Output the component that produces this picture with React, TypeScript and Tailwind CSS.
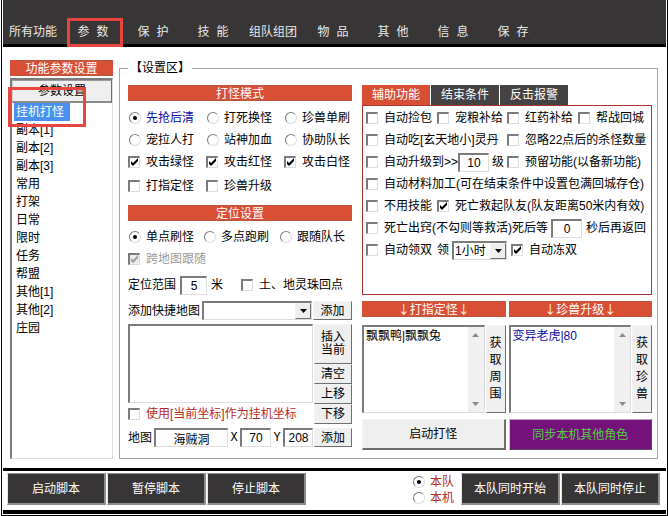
import type { ReactNode } from 'react';
import { clsx } from 'clsx';

interface NavItem {
  readonly id: string;
  readonly label: string;
}

const NAV_ITEMS: NavItem[] = [
  { id: 'all', label: '所有功能' },
  { id: 'params', label: '参 数' },
  { id: 'guard', label: '保 护' },
  { id: 'skill', label: '技 能' },
  { id: 'team', label: '组队组团' },
  { id: 'items', label: '物 品' },
  { id: 'other', label: '其 他' },
  { id: 'info', label: '信 息' },
  { id: 'save', label: '保 存' },
];

const SECTIONS = [
  '挂机打怪',
  '副本[1]',
  '副本[2]',
  '副本[3]',
  '常用',
  '打架',
  '日常',
  '限时',
  '任务',
  '帮盟',
  '其他[1]',
  '其他[2]',
  '庄园',
];

const BEVEL = 'border border-t-[#f4f4f4] border-l-[#f4f4f4] border-b-[#6e6e6e] border-r-[#6e6e6e] bg-[#efefef]';
const SUNKEN = 'border-t-2 border-l-2 border-b border-r border-t-[#7b7b7b] border-l-[#7b7b7b] border-b-[#dcdcdc] border-r-[#dcdcdc] bg-white';

interface ChoiceProps {
  children: ReactNode;
  checked?: boolean;
  disabled?: boolean;
  className?: string;
}

function Tick({ children, checked, disabled, className }: ChoiceProps) {
  return (
    <label className={clsx('flex items-center gap-[6px] whitespace-nowrap', disabled && 'text-[#9c9c9c]', className)}>
      <span className="relative size-3 shrink-0">
        <input
          type="checkbox"
          defaultChecked={checked}
          disabled={disabled}
          className="peer block size-3 appearance-none border-t-2 border-l-2 border-b border-r border-t-[#7b7b7b] border-l-[#7b7b7b] border-b-[#dcdcdc] border-r-[#dcdcdc] bg-white disabled:bg-[#ececec]"
        />
        <svg viewBox="0 0 12 12" className="pointer-events-none absolute inset-0 hidden size-3 peer-checked:block">
          <path d="M3 5v3l2 2 5-5V2L5 7z" fill="currentColor" />
        </svg>
      </span>
      <span>{children}</span>
    </label>
  );
}

function Radio({ children, checked, name, className }: ChoiceProps & { name: string }) {
  return (
    <label className={clsx('flex items-center gap-[5px] whitespace-nowrap', className)}>
      <span className="relative ml-px size-3 shrink-0">
        <input
          type="radio"
          name={name}
          defaultChecked={checked}
          className="peer block size-3 appearance-none rounded-full border border-t-[#7b7b7b] border-l-[#7b7b7b] border-b-[#dcdcdc] border-r-[#dcdcdc] bg-white"
        />
        <span className="pointer-events-none absolute top-1 left-1 hidden size-1 rounded-full bg-black peer-checked:block" />
      </span>
      <span>{children}</span>
    </label>
  );
}

function Bar({ children, className }: { children: ReactNode; className?: string }) {
  return (
    <h2
      className={clsx(
        "flex h-4 items-center justify-center border-y border-y-[#b5563f] bg-[#d94f35] font-['Noto_Sans_CJK_SC',sans-serif] text-white",
        className,
      )}
    >
      {children}
    </h2>
  );
}

function Field({ label, value, className }: { label: string; value: string; className: string }) {
  return (
    <input
      aria-label={label}
      defaultValue={value}
      className={clsx('h-[19px] min-w-0 shrink-0 text-center', SUNKEN, className)}
    />
  );
}

function Dropdown({ label, options, className }: { label: string; options: string[]; className: string }) {
  return (
    <span className={clsx('relative shrink-0', className)}>
      <select aria-label={label} className={clsx('block h-[19px] w-full appearance-none pl-px', SUNKEN)}>
        {options.map(option => (
          <option key={option}>{option}</option>
        ))}
      </select>
      <span className={clsx('pointer-events-none absolute top-[2px] right-px flex h-4 w-4 items-center justify-center', BEVEL)}>
        <svg viewBox="0 0 7 4" className="h-1 w-[7px]">
          <path d="M0 0h7L3.5 4z" fill="#000" />
        </svg>
      </span>
    </span>
  );
}

function PushButton({ children, className }: { children: ReactNode; className?: string }) {
  return (
    <button type="button" className={clsx('flex items-center justify-center', BEVEL, className)}>
      {children}
    </button>
  );
}

function TargetList({ label, value, action, className }: { label: string; value: string; action: string; className?: string }) {
  return (
    <div className="flex h-[88px]">
      <div className={clsx('flex min-w-0 flex-1', SUNKEN)}>
        <textarea
          aria-label={label}
          defaultValue={value}
          className={clsx('min-w-0 flex-1 resize-none overflow-hidden pl-[2px] leading-[18px]', className)}
        />
        <div className="flex w-4 flex-col items-center justify-between bg-[#f0f0f0] py-[6px]">
          <svg viewBox="0 0 7 4" className="h-1 w-[7px]">
            <path d="M0 4h7L3.5 0z" fill="#8a8a8a" />
          </svg>
          <svg viewBox="0 0 7 4" className="h-1 w-[7px]">
            <path d="M0 0h7L3.5 4z" fill="#8a8a8a" />
          </svg>
        </div>
      </div>
      <PushButton className="ml-px w-5">
        <span className="w-3 leading-[17px] break-all">{action}</span>
      </PushButton>
    </div>
  );
}

function ScriptButton({ children }: { children: ReactNode }) {
  return (
    <button
      type="button"
      className="h-8 w-[99px] border border-t-[#8c8c8c] border-l-[#e4e4e4] border-r-2 border-b-2 border-r-[#8c8c8c] border-b-[#8c8c8c] bg-[#373535] text-white"
    >
      {children}
    </button>
  );
}

function TopNav() {
  return (
    <nav className="flex h-[47px] items-end border-b-[3px] border-black bg-[#373535] pt-[18px] font-['Liberation_Mono','Noto_Sans_CJK_SC',monospace] text-[#e9e9e9]">
      {NAV_ITEMS.map(item => (
        <button key={item.id} type="button" className="relative h-[26px] w-[60px] shrink-0 pt-1 whitespace-nowrap">
          {item.label}
          {item.id === 'params' && (
            <span className="pointer-events-none absolute top-0 right-0 h-[29px] w-14 border-[3px] border-[#e8453f]" />
          )}
        </button>
      ))}
    </nav>
  );
}

function Sidebar() {
  return (
    <aside className="flex w-[103px] shrink-0 flex-col">
      <Bar>功能参数设置</Bar>
      <div className={clsx('relative mt-[2px] flex-1', SUNKEN)}>
        <button type="button" className="flex h-[23px] w-full items-center justify-center border border-r-[#6e6e6e] border-b-2 border-t-[#9a9a9a] border-l-[#d0d0d0] border-b-[#8a8a8a] bg-[#efefef]">
          参数设置
        </button>
        <ul className="pl-[2px]">
          {SECTIONS.map((section, index) => (
            <li key={section} className="h-[18px]">
              <button
                type="button"
                className={clsx('block h-[18px] px-[2px] leading-[18px]', index === 0 && 'w-14 bg-[#4a90ee] text-left text-white')}
              >
                {section}
              </button>
            </li>
          ))}
        </ul>
        <span className="pointer-events-none absolute top-[7px] -left-1 h-10 w-[78px] border-[3px] border-[#e8453f]" />
      </div>
    </aside>
  );
}

function ModePanel() {
  return (
    <div className="w-[224px] shrink-0">
      <Bar>打怪模式</Bar>
      <div className="mt-[6px] grid grid-cols-[78px_78px_68px] auto-rows-[22px]">
        <Radio name="mode" checked><span className="text-[#0b0ba8]">先抢后清</span></Radio>
        <Radio name="mode">打死换怪</Radio>
        <Radio name="mode">珍兽单刷</Radio>
        <Radio name="mode">宠拉人打</Radio>
        <Radio name="mode">站神加血</Radio>
        <Radio name="mode">协助队长</Radio>
        <Tick checked>攻击绿怪</Tick>
        <Tick checked>攻击红怪</Tick>
        <Tick checked>攻击白怪</Tick>
      </div>
      <div className="grid h-[26px] grid-cols-[78px_78px_68px]">
        <Tick>打指定怪</Tick>
        <Tick>珍兽升级</Tick>
      </div>

      <Bar className="mt-[6px]">定位设置</Bar>
      <div className="mt-[5px] grid grid-cols-[75px_76px_73px] auto-rows-[22px]">
        <Radio name="locate" checked>单点刷怪</Radio>
        <Radio name="locate">多点跑刷</Radio>
        <Radio name="locate">跟随队长</Radio>
        <Tick checked disabled>跨地图跟随</Tick>
      </div>
      <div className="mt-[2px] flex h-[26px] items-center">
        <span>定位范围</span>
        <Field label="定位范围" value="5" className="ml-1 w-[27px]" />
        <span className="ml-1">米</span>
        <Tick className="ml-[18px]">土、地灵珠回点</Tick>
      </div>
      <div className="mt-[3px] flex items-center">
        <span className="whitespace-nowrap">添加快捷地图</span>
        <Dropdown label="添加快捷地图" options={['']} className="ml-[2px] w-[110px]" />
        <PushButton className="ml-px h-[19px] flex-1">添加</PushButton>
      </div>
      <div className="mt-1 flex">
        <div className="w-[185px] shrink-0">
          <select aria-label="坐标列表" size={4} className={clsx('block h-[79px] w-full', SUNKEN)} />
          <Tick className="h-[22px] text-[#b8281e]">使用[当前坐标]作为挂机坐标</Tick>
        </div>
        <div className="ml-px flex flex-1 flex-col">
          <PushButton className="h-10 leading-[13px]">
            <span className="w-6">插入当前</span>
          </PushButton>
          <PushButton className="h-5">清空</PushButton>
          <PushButton className="h-5">上移</PushButton>
          <PushButton className="h-5">下移</PushButton>
        </div>
      </div>
      <div className="mt-[3px] flex items-center">
        <span>地图</span>
        <Field label="地图" value="海贼洞" className="ml-[2px] w-[74px]" />
        <span className="w-3 text-center font-['Liberation_Mono',monospace]">X</span>
        <Field label="X" value="70" className="w-[31px]" />
        <span className="w-3 text-center font-['Liberation_Mono',monospace]">Y</span>
        <Field label="Y" value="208" className="w-[30px]" />
        <PushButton className="ml-px h-[19px] flex-1">添加</PushButton>
      </div>
    </div>
  );
}

function AssistPanel() {
  return (
    <div className="min-w-0 flex-1">
      <div className="flex gap-px text-white">
        <button type="button" className="h-5 w-[68px] bg-[#d94f35]">辅助功能</button>
        <button type="button" className="h-5 w-[68px] bg-[#444242]">结束条件</button>
        <button type="button" className="h-5 w-[68px] bg-[#444242]">反击报警</button>
      </div>
      <div className="border border-[#a8352e] pt-px pb-[33px] pl-[3px]">
        <div className="grid h-[22px] grid-cols-[71px_70px_71px_1fr]">
          <Tick>自动捡包</Tick>
          <Tick>宠粮补给</Tick>
          <Tick>红药补给</Tick>
          <Tick>帮战回城</Tick>
        </div>
        <div className="grid h-[22px] grid-cols-[141px_1fr]">
          <Tick>自动吃[玄天地小]灵丹</Tick>
          <Tick>忽略22点后的杀怪数量</Tick>
        </div>
        <div className="grid h-[22px] grid-cols-[141px_1fr]">
          <div className="flex items-center">
            <Tick>自动升级到&gt;&gt;</Tick>
            <Field label="自动升级到" value="10" className="w-[31px]" />
            <span className="ml-[3px]">级</span>
          </div>
          <Tick>预留功能(以备新功能)</Tick>
        </div>
        <Tick className="h-[22px]">自动材料加工(可在结束条件中设置包满回城存仓)</Tick>
        <div className="grid h-[22px] grid-cols-[71px_1fr]">
          <Tick>不用技能</Tick>
          <Tick checked>死亡救起队友(队友距离50米内有效)</Tick>
        </div>
        <div className="flex h-[22px] items-center">
          <Tick>死亡出窍(不勾则等救活)死后等</Tick>
          <Field label="死后等待秒数" value="0" className="ml-[3px] w-[31px]" />
          <span className="ml-1 whitespace-nowrap">秒后再返回</span>
        </div>
        <div className="flex h-[22px] items-center">
          <Tick>自动领双</Tick>
          <span className="ml-[5px]">领</span>
          <Dropdown label="领双时长" options={['1小时']} className="ml-[3px] w-[55px]" />
          <Tick checked className="ml-1">自动冻双</Tick>
        </div>
      </div>

      <div className="mt-[6px] grid grid-cols-2 gap-x-[3px]">
        <Bar>↓打指定怪↓</Bar>
        <Bar>↓珍兽升级↓</Bar>
      </div>
      <div className="mt-2 grid grid-cols-2 gap-x-[3px]">
        <TargetList label="打指定怪" value="飘飘鸭|飘飘兔" action="获取周围" />
        <TargetList label="珍兽升级" value="变异老虎|80" action="获取珍兽" className="text-[#0b0ba8]" />
      </div>
      <div className="mt-[6px] grid grid-cols-2 gap-x-[3px]">
        <PushButton className="h-[31px] border-r-2 border-b-2">启动打怪</PushButton>
        <button type="button" className="h-[31px] border border-t-[#b9a0bc] border-l-[#d9c8db] border-r-[#5b4a5e] border-b-[#5b4a5e] bg-[#74117b] text-[#55cc44]">
          同步本机其他角色
        </button>
      </div>
    </div>
  );
}

function Footer() {
  return (
    <footer className="flex items-start border-t-[3px] border-b-4 border-black pt-[2px] pr-[6px] pb-1 pl-1">
      <div className="flex gap-px">
        <ScriptButton>启动脚本</ScriptButton>
        <ScriptButton>暂停脚本</ScriptButton>
        <ScriptButton>停止脚本</ScriptButton>
      </div>
      <div className="mt-px mr-[7px] ml-auto text-[#b8281e]">
        <Radio name="scope" checked className="h-4">本队</Radio>
        <Radio name="scope" className="h-4">本机</Radio>
      </div>
      <div className="flex gap-px">
        <ScriptButton>本队同时开始</ScriptButton>
        <ScriptButton>本队同时停止</ScriptButton>
      </div>
    </footer>
  );
}

export default function App() {
  return (
    <div className="bg-white font-['Liberation_Sans','Noto_Sans_CJK_SC',sans-serif] text-[12px] leading-4 text-black">
      <div className="ml-px border-x border-b border-black px-px pb-px">
        <TopNav />
        <main className="flex gap-[6px] pt-[13px] pr-2 pb-[9px] pl-[7px]">
          <Sidebar />
          <fieldset className="min-w-0 flex-1 border border-[#a5a5a5] pt-[9px] pr-[5px] pb-2 pl-2">
            <legend className="h-4 px-[2px]">【设置区】</legend>
            <div className="flex gap-[10px]">
              <ModePanel />
              <AssistPanel />
            </div>
          </fieldset>
        </main>
        <Footer />
      </div>
    </div>
  );
}
